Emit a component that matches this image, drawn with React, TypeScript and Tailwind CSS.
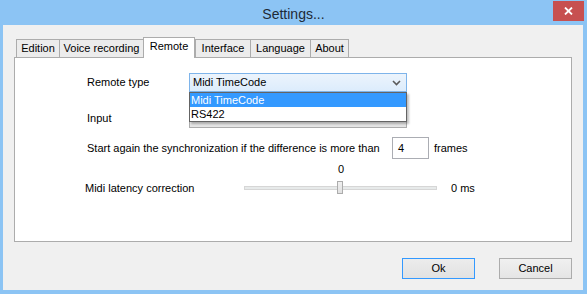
import React from "react";

const tabs = [
  { name: "Edition", w: "w-[43px]" },
  { name: "Voice recording", w: "w-[84px]" },
  { name: "Remote", w: "w-[52px]" },
  { name: "Interface", w: "w-[55px]" },
  { name: "Language", w: "w-[60px]" },
  { name: "About", w: "w-[39px]" },
];

function Chevron() {
  return (
    <svg width="9" height="6" viewBox="0 0 9 6">
      <polyline points="1,1 4.5,4.5 8,1" fill="none" stroke="#5a5a5a" strokeWidth="1.6" />
    </svg>
  );
}

export default function App() {
  return (
    <div
      className="w-[587px] h-[294px] bg-[#8cc4f4] flex flex-col text-[11px] text-black"
      style={{ fontFamily: '"Liberation Sans", Arial, sans-serif' }}
    >
      {/* title bar */}
      <div className="h-[25px] grid grid-cols-[1fr_auto_1fr] items-start">
        <div />
        <div className="pt-[4px] text-[14px] text-[#1e2a36]">Settings...</div>
        <div className="flex justify-end pr-[3px] pt-[1px]">
          <div className="w-[31px] h-[20px] bg-[#c75050] flex items-center justify-center">
            <svg width="9" height="8" viewBox="0 0 9 8">
              <path d="M1 0.5 L8 7.5 M8 0.5 L1 7.5" stroke="white" strokeWidth="1.8" />
            </svg>
          </div>
        </div>
      </div>

      {/* body */}
      <div className="flex-1 mx-[3px] mb-[4px] ml-[3px] mr-[4px] bg-[#f0f0f0] flex flex-col px-[11px] pt-[12px]">
        {/* tabs */}
        <div className="flex items-end h-[20px] pl-[2px]">
          {tabs.map((t) =>
            t.name === "Remote" ? (
              <div
                key={t.name}
                className={`${t.w} h-[21px] -mb-px relative z-10 bg-white border border-b-0 border-[#acacac] flex items-center justify-center pb-[3px]`}
              >
                {t.name}
              </div>
            ) : (
              <div
                key={t.name}
                className={`${t.w} h-[18px] bg-[#ececec] border border-b-0 border-r-0 last:border-r border-[#acacac] flex items-center justify-center`}
              >
                {t.name}
              </div>
            )
          )}
        </div>

        {/* panel */}
        <div className="h-[185px] bg-white border border-[#acacac] flex flex-col pl-[72px] pt-[15px]">
          <div className="flex items-center h-[19px]">
            <div className="w-[102px]">Remote type</div>
            <div className="relative">
              <div className="w-[218px] h-[19px] border border-[#7eb4ea] bg-gradient-to-b from-[#ecf4fc] to-[#dcecfc] flex items-center justify-between pl-[3px] pr-[5px]">
                <span>Midi TimeCode</span>
                <Chevron />
              </div>
              <div className="absolute left-0 top-[19px] w-[218px] z-20 bg-white border border-[#646464] shadow-[2px_2px_2px_rgba(0,0,0,0.25)]">
                <div className="h-[14px] bg-[#3399ff] text-white flex items-center pl-[1px]">
                  Midi TimeCode
                </div>
                <div className="h-[14px] flex items-center pl-[1px]">RS422</div>
              </div>
            </div>
          </div>

          <div className="flex items-center h-[19px] mt-[17px]">
            <div className="w-[102px]">Input</div>
            <div className="w-[218px] h-[19px] border border-[#acacac] bg-[#e5e5e5]" />
          </div>

          <div className="flex items-center h-[22px] mt-[9px]">
            <span className="w-[305px]">
              Start again the synchronization if the difference is more than
            </span>
            <div className="w-[37px] h-[22px] border border-[#abadb3] bg-white flex items-center pl-[5px]">
              4
            </div>
            <span className="ml-[5px]">frames</span>
          </div>

          <div className="flex flex-col mt-[3px] -ml-[2px]">
            <div className="flex">
              <div className="w-[159px]" />
              <div className="w-[193px] text-center h-[15px] leading-[15px] pl-[1px]">0</div>
            </div>
            <div className="flex items-center h-[14px] mt-[4px]">
              <div className="w-[159px]">Midi latency correction</div>
              <div className="w-[193px] h-[14px] flex items-center relative">
                <div className="w-full h-[4px] bg-[#e7eaea] border border-[#d6d6d6]" />
                <div className="absolute left-[93px] top-0 w-[6px] h-[13px] border border-[#acacac] bg-gradient-to-b from-[#f0f0f0] to-[#e1e1e1]" />
              </div>
              <div className="ml-[14px]">0 ms</div>
            </div>
          </div>
        </div>

        {/* buttons */}
        <div className="flex justify-end gap-[24px] mt-[16px]">
          <button className="w-[73px] h-[21px] border border-[#3399ff] bg-gradient-to-b from-[#ececec] to-[#e2e2e2] text-[11px]">
            Ok
          </button>
          <button className="w-[73px] h-[21px] border border-[#acacac] bg-gradient-to-b from-[#f0f0f0] to-[#e5e5e5] text-[11px]">
            Cancel
          </button>
        </div>
      </div>
    </div>
  );
}
